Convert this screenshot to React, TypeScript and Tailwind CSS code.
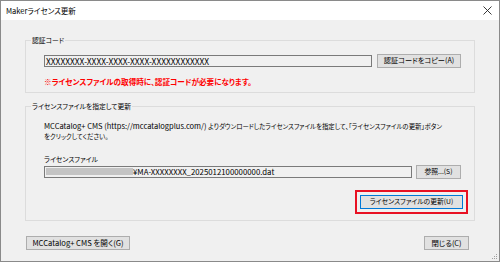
import React from "react";

const font = { fontFamily: '"Noto Sans CJK JP", "Noto Sans", sans-serif' };

function Btn({ children, className = "" }: { children: React.ReactNode; className?: string }) {
  return (
    <div
      className={
        "flex items-center justify-center whitespace-nowrap border border-[#adadad] bg-[#e1e1e1] leading-none text-black " +
        className
      }
    >
      {children}
    </div>
  );
}

export default function App() {
  return (
    <div className="w-[500px] h-[262px] overflow-hidden [font-feature-settings:'palt']" style={font}>
      <div className="w-[500px] h-[262px] border border-[#8a8a8a] bg-[#f0f0f0] flex flex-col relative">
        {/* title bar */}
        <div className="h-[19px] bg-white flex items-center justify-between pl-[5px] pr-[6px] shrink-0">
          <span className="text-[7.5px] leading-none text-black">Makerライセンス更新</span>
          <svg width="9" height="9" viewBox="0 0 9 9" className="mr-[1px]">
            <path d="M0.5 0.5 L8.5 8.5 M8.5 0.5 L0.5 8.5" stroke="#222" strokeWidth="0.9" fill="none" />
          </svg>
        </div>

        <div className="flex flex-col px-[24px] pt-[14px]">
          {/* group 1 */}
          <fieldset className="min-w-0 border border-[#dcdcdc] px-0 pb-[4px]">
            <legend className="ml-[5px] px-[1px] text-[6.8px] leading-[12px] text-black">認証コード</legend>
            <div className="pl-[18px] pr-[12px] pt-[8px]">
              <div className="flex items-center gap-[5px] h-[14px]">
                <div className="w-[328px] h-[12px] border border-[#7a7a7a] bg-[#f0f0f0] flex items-center px-[1px] text-[8.4px] leading-none text-black whitespace-nowrap overflow-hidden">
                  XXXXXXXX-XXXX-XXXX-XXXX-XXXXXXXXXXXX
                </div>
                <Btn className="w-[84px] h-[14px] text-[7.2px]">認証コードをコピー(A)</Btn>
              </div>
              <div className="mt-[8px] text-[7.6px] leading-[12px] font-bold text-[#ff0000] whitespace-nowrap">
                ※ライセンスファイルの取得時に、認証コードが必要になります。
              </div>
            </div>
          </fieldset>

          {/* group 2 */}
          <fieldset className="min-w-0 mt-[7px] border border-[#dcdcdc] px-0 pb-[6px]">
            <legend className="ml-[5px] px-[1px] text-[6.8px] leading-[12px] text-black">ライセンスファイルを指定して更新</legend>
            <div className="pl-[18px] pr-[12px] pt-[10px]">
              <div className="text-[7.5px] leading-[8.5px] text-black whitespace-nowrap">
                MCCatalog+ CMS (https://mccatalogplus.com/){" "}
                <span className="text-[6.4px]">よりダウンロードしたライセンスファイルを指定して、「ライセンスファイルの更新」ボタン</span>
                <br />
                <span className="text-[6.4px]">をクリックしてください。</span>
              </div>
              <div className="mt-[11.5px] text-[6.8px] leading-[12px] text-black">ライセンスファイル</div>
              <div className="flex items-center gap-[4px] h-[14px]">
                <div className="w-[368px] h-[12px] border border-[#7a7a7a] bg-[#f0f0f0] flex items-center text-[7.8px] leading-none text-black whitespace-nowrap overflow-hidden">
                  <div className="w-[87px] h-[7px] bg-[#c4c4c4] ml-[1px] shrink-0" />
                  <span>¥MA-XXXXXXXX_2025012100000000.dat</span>
                </div>
                <Btn className="w-[45px] h-[14px] text-[6.8px]">参照...(S)</Btn>
              </div>
              <div className="mt-[11px] flex justify-end">
                <div className="mr-[-6px] border-[2px] border-[#e81123] p-[3px]">
                  <Btn className="w-[103px] h-[14px] text-[6.8px] !border-[#0078d7]">ライセンスファイルの更新(U)</Btn>
                </div>
              </div>
            </div>
          </fieldset>

          {/* bottom buttons */}
          <div className="mt-[15px] flex justify-between pl-[1px] pr-[6px]">
            <Btn className="w-[104px] h-[14px] text-[7.6px]">MCCatalog+ CMS を開く(G)</Btn>
            <Btn className="w-[45px] h-[14px] text-[7.4px]">閉じる(C)</Btn>
          </div>
        </div>

        {/* resize grip */}
        <svg width="6" height="6" viewBox="0 0 6 6" className="absolute right-[1px] bottom-[1px]">
          <rect x="4" y="0" width="1" height="1" fill="#a0a0a0" />
          <rect x="2" y="2" width="1" height="1" fill="#a0a0a0" />
          <rect x="4" y="2" width="1" height="1" fill="#a0a0a0" />
          <rect x="0" y="4" width="1" height="1" fill="#a0a0a0" />
          <rect x="2" y="4" width="1" height="1" fill="#a0a0a0" />
          <rect x="4" y="4" width="1" height="1" fill="#a0a0a0" />
        </svg>
      </div>
    </div>
  );
}
